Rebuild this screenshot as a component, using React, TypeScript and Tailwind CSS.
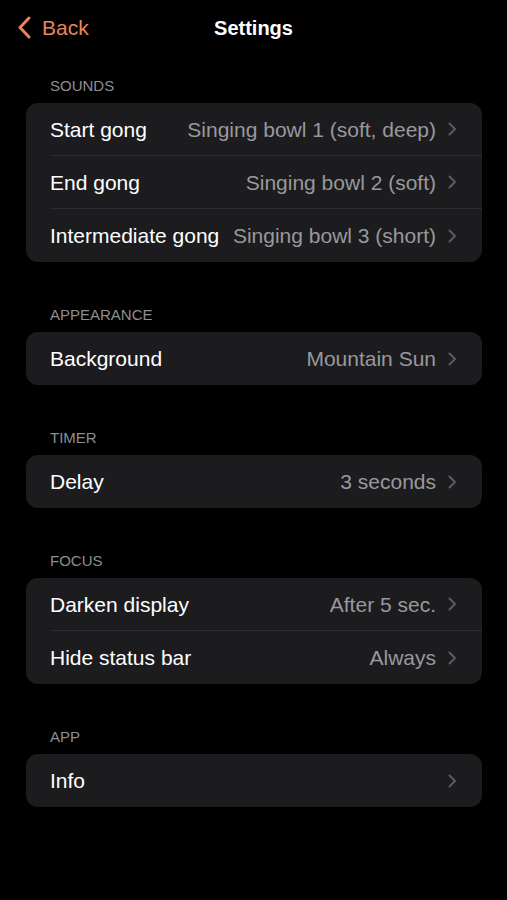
import React from 'react';

type Row = { label: string; value?: string };
type Section = { title: string; rows: Row[] };

const sections: Section[] = [
  {
    title: 'SOUNDS',
    rows: [
      { label: 'Start gong', value: 'Singing bowl 1 (soft, deep)' },
      { label: 'End gong', value: 'Singing bowl 2 (soft)' },
      { label: 'Intermediate gong', value: 'Singing bowl 3 (short)' },
    ],
  },
  { title: 'APPEARANCE', rows: [{ label: 'Background', value: 'Mountain Sun' }] },
  { title: 'TIMER', rows: [{ label: 'Delay', value: '3 seconds' }] },
  {
    title: 'FOCUS',
    rows: [
      { label: 'Darken display', value: 'After 5 sec.' },
      { label: 'Hide status bar', value: 'Always' },
    ],
  },
  { title: 'APP', rows: [{ label: 'Info' }] },
];

const Chevron = () => (
  <svg width="9" height="14" viewBox="0 0 9 14" fill="none" className="shrink-0">
    <path d="M1.5 1.5 L7 7 L1.5 12.5" stroke="#5c5c60" strokeWidth="2" strokeLinecap="round" strokeLinejoin="round" />
  </svg>
);

const App: React.FC = () => {
  return (
    <div className="min-h-[900px] w-full bg-black text-white font-['Liberation_Sans',Arial,sans-serif]">
      {/* nav bar */}
      <div className="relative flex h-[56px] items-center justify-center">
        <button className="absolute left-[17px] top-[15px] flex items-center gap-[11px] text-[#e8845c]">
          <svg width="14" height="23" viewBox="0 0 14 23" fill="none">
            <path d="M12 2 L3 11.5 L12 21" stroke="#e8845c" strokeWidth="3" strokeLinecap="round" strokeLinejoin="round" />
          </svg>
          <span className="text-[21px] leading-[25px]">Back</span>
        </button>
        <h1 className="text-[20px] font-bold leading-[24px]">Settings</h1>
      </div>

      <div className="pl-[26px] pr-[25px] pt-[21px]">
        {sections.map((section, i) => (
          <div key={section.title} className={i > 0 ? 'mt-[44px]' : ''}>
            <div className="mb-[8px] pl-[24px] text-[15px] leading-[18px] text-[#8d8d92]">{section.title}</div>
            <div className="overflow-hidden rounded-[12px] bg-[#1c1c1e]">
              {section.rows.map((row, j) => (
                <div key={row.label} className="pl-[24px]">
                  <div
                    className={`flex h-[53px] items-center gap-[12px] pr-[25px] ${
                      j < section.rows.length - 1 ? 'border-b border-[#2c2c2f]' : ''
                    }`}
                  >
                    <span className="shrink-0 text-[21px] leading-[25px] text-white">{row.label}</span>
                    <span className="ml-auto truncate text-[21px] leading-[25px] text-[#98989d]">{row.value}</span>
                    <Chevron />
                  </div>
                </div>
              ))}
            </div>
          </div>
        ))}
      </div>
    </div>
  );
};

export default App;
